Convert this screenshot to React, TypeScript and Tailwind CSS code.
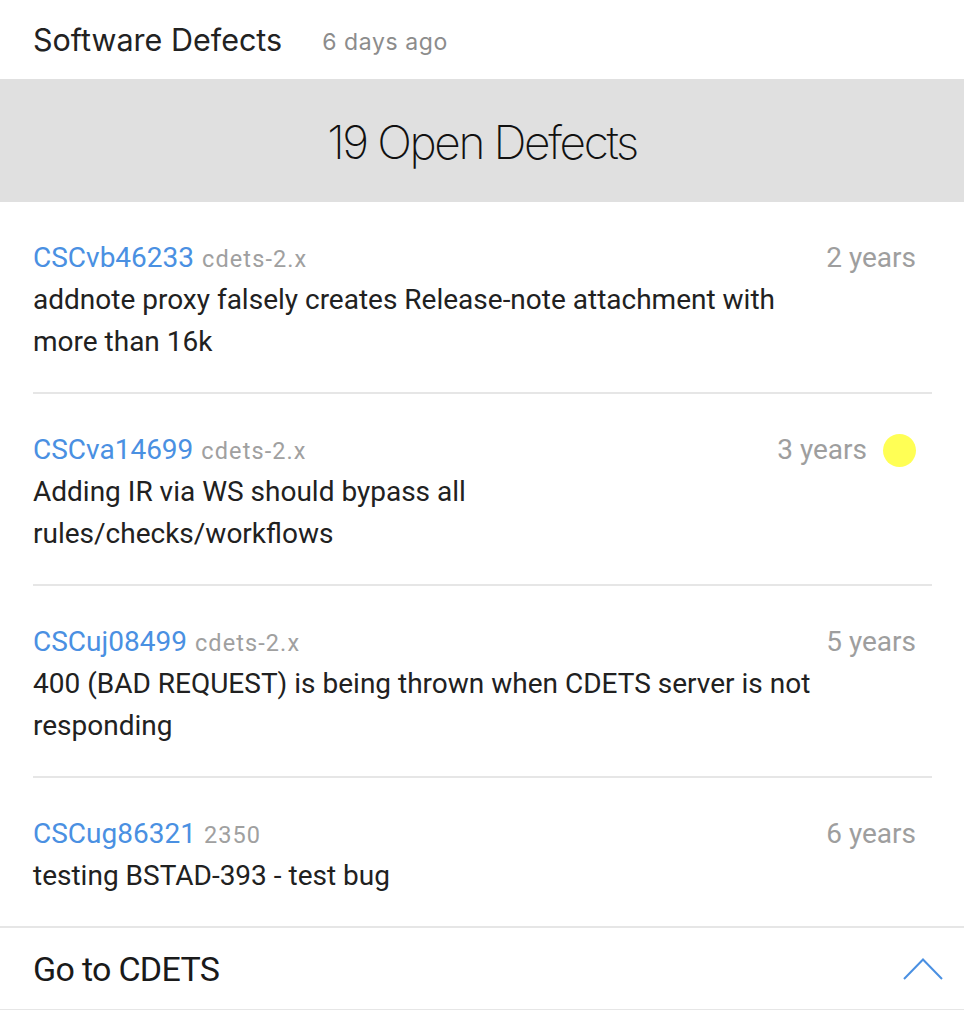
import React from 'react';

type Defect = {
  id: string;
  project: string;
  age: string;
  title: string[];
  flagged?: boolean;
};

const defects: Defect[] = [
  {
    id: 'CSCvb46233',
    project: 'cdets-2.x',
    age: '2 years',
    title: ['addnote proxy falsely creates Release-note attachment with', 'more than 16k'],
  },
  {
    id: 'CSCva14699',
    project: 'cdets-2.x',
    age: '3 years',
    title: ['Adding IR via WS should bypass all', 'rules/checks/workflows'],
    flagged: true,
  },
  {
    id: 'CSCuj08499',
    project: 'cdets-2.x',
    age: '5 years',
    title: ['400 (BAD REQUEST) is being thrown when CDETS server is not', 'responding'],
  },
  {
    id: 'CSCug86321',
    project: '2350',
    age: '6 years',
    title: ['testing BSTAD-393 - test bug'],
  },
];

export default function App() {
  return (
    <div className="w-[964px] bg-white">
      {/* Header */}
      <div className="flex items-center h-[79px] px-[33px] gap-[40px] font-['Inter',sans-serif]">
        <span className="text-[30.5px] text-[#222]">Software Defects</span>
        <span className="text-[23px] text-[#8c8c8c] mt-[5px] tracking-[0.6px]">6 days ago</span>
      </div>

      {/* Summary band */}
      <div className="flex items-center justify-center h-[123px] bg-[#e0e0e0]">
        <span className="text-[46px] font-extralight text-[#111] tracking-[-2.4px] mt-[4px] font-['Inter',sans-serif]">
          19 Open Defects
        </span>
      </div>

      {/* List */}
      <div className="font-['Roboto',sans-serif]">
        {defects.map((d, i) => (
          <div key={d.id} className="pl-[33px] pr-[32px]">
            <div
              className={
                i < defects.length - 1
                  ? 'pt-[35px] pb-[29px] border-b-2 border-[#e6e6e6]'
                  : 'pt-[35px] pb-[29px]'
              }
            >
              <div className="flex items-center justify-between h-[42px] pr-[16px]">
                <div className="flex items-baseline gap-[8px]">
                  <span className="text-[28px] text-[#4a90e2]">{d.id}</span>
                  <span className="text-[23.5px] text-[#a0a0a0] tracking-[1.1px]">{d.project}</span>
                </div>
                <div className="flex items-center gap-[16px]">
                  <span className="text-[28px] text-[#9e9e9e]">{d.age}</span>
                  {d.flagged && <span className="w-[33px] h-[33px] rounded-full bg-[#ffff55]" />}
                </div>
              </div>
              <div className="text-[28px] leading-[42px] text-[#212121]">
                {d.title.map((line) => (
                  <div key={line}>{line}</div>
                ))}
              </div>
            </div>
          </div>
        ))}
      </div>

      {/* Footer */}
      <div className="flex items-center justify-between h-[84px] pl-[33px] pr-[21px] border-t-2 border-b border-[#e6e6e6]">
        <span className="text-[34px] text-[#1a1a1a] font-['Roboto',sans-serif] tracking-[-0.7px] mt-[1px]">Go to CDETS</span>
        <svg width="40" height="22" viewBox="0 0 40 22" fill="none">
          <path d="M1 21 L20 1.5 L39 21" stroke="#4a90e2" strokeWidth="2" />
        </svg>
      </div>
    </div>
  );
}
